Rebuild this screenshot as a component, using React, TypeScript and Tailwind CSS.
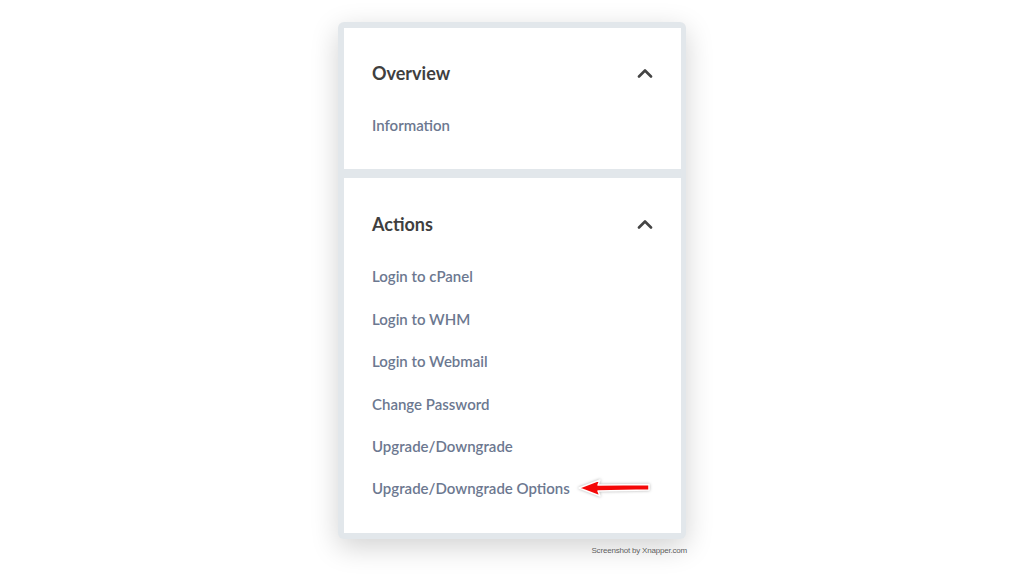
import React from "react";

const actions = [
  "Login to cPanel",
  "Login to WHM",
  "Login to Webmail",
  "Change Password",
  "Upgrade/Downgrade",
  "Upgrade/Downgrade Options",
];

function Chevron() {
  return (
    <svg width="16" height="10" viewBox="0 0 16 10" className="text-[#444]">
      <path d="M2 8.5 L8 2.5 L14 8.5" fill="none" stroke="currentColor" strokeWidth="2.6" strokeLinecap="round" strokeLinejoin="round" />
    </svg>
  );
}

function Arrow() {
  return (
    <svg width="76" height="22" viewBox="0 0 76 22" className="ml-[8px] -mt-[2px] shrink-0" style={{ filter: "drop-shadow(0 0 1.5px rgba(0,0,0,0.3))" }}>
      <path d="M1 11 L22 3 L20 8 L71 7.5 L71 13 L20 14 L22 19 Z" fill="#f40808" stroke="#ffffff" strokeWidth="1.5" strokeLinejoin="round" />
    </svg>
  );
}

function Panel({ title, items, top }: { title: string; items: string[]; top: string }) {
  return (
    <div className={`bg-white px-7 pb-[23px] ${top}`}>
      <div className="flex items-center justify-between h-6">
        <span className="text-[18px] font-bold text-[#3f3f3f]">{title}</span>
        <Chevron />
      </div>
      <ul className="mt-[19px]">
        {items.map((item) => (
          <li key={item} className="h-[42.4px] flex items-center whitespace-nowrap text-[15px] font-semibold text-[#6c7890]">
            <span>{item}</span>
            {item === "Upgrade/Downgrade Options" && <Arrow />}
          </li>
        ))}
      </ul>
    </div>
  );
}

export default function App() {
  return (
    <div className="w-[1024px] h-[576px] bg-white flex flex-col items-center pt-[22px]" style={{ fontFamily: "Lato, 'Open Sans', sans-serif" }}>
      <div className="w-[348px] bg-[#e2e7eb] rounded-md pt-[6px] pl-[6px] pr-[5px] pb-[6px] flex flex-col gap-[9px] shadow-[0_8px_28px_rgba(0,0,0,0.18)]">
        <Panel title="Overview" items={["Information"]} top="pt-[33px]" />
        <Panel title="Actions" items={actions} top="pt-[34px]" />
      </div>
      <div className="w-[350px] flex justify-end mt-[6px]">
        <span className="text-[8px] text-[#5a5a5a] tracking-tight" style={{ fontFamily: "'Liberation Sans', sans-serif", textShadow: "0 0 1px #fff" }}>
          Screenshot by Xnapper.com
        </span>
      </div>
    </div>
  );
}
